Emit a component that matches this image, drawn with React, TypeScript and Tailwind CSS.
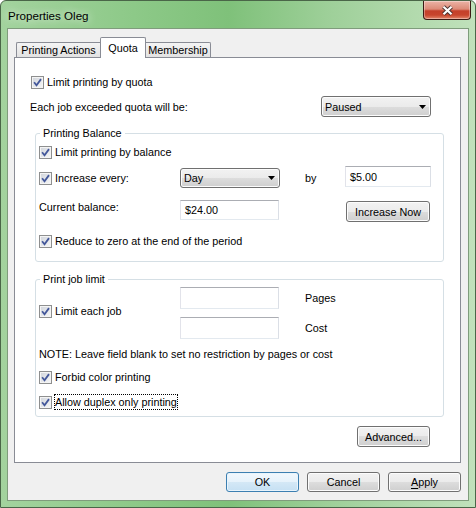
import React from "react";

const face = "font-['Liberation_Sans',Arial,sans-serif]";
const buttonFace =
  "rounded-[3px] border border-[#707070] bg-[linear-gradient(#f2f2f2_0%,#ebebeb_50%,#dddddd_50%,#cfcfcf_100%)] shadow-[inset_0_0_0_1px_#fcfcfc]";
const fieldFace =
  "border border-[#e3e9ef] border-t-[#abadb3] border-l-[#e2e3ea] border-r-[#dbdfe6] bg-white";

function CheckBox() {
  return (
    <span className="flex h-[13px] w-[13px] shrink-0 items-center justify-center border border-[#8e8f8f] bg-[linear-gradient(135deg,#cfd3da,#f8f8f8)] shadow-[inset_0_0_0_1px_#f4f4f4]">
      <svg width="9" height="9" viewBox="0 0 9 9">
        <path d="M1.1 4.3 L3.5 7.2 L8 1.1" fill="none" stroke="#43579a" strokeWidth="1.8" />
      </svg>
    </span>
  );
}

function Check({ label, focused = false, className = "" }: { label: string; focused?: boolean; className?: string }) {
  return (
    <div className={`flex h-[20px] items-center ${className}`}>
      <CheckBox />
      <span className={`ml-[3px] leading-[14px] ${focused ? "outline-1 outline-dotted outline-black" : ""}`}>{label}</span>
    </div>
  );
}

function Combo({ value, className = "" }: { value: string; className?: string }) {
  return (
    <div className={`flex items-center justify-between pl-[3px] pr-[4px] ${buttonFace} ${className}`}>
      <span>{value}</span>
      <svg width="7" height="4" viewBox="0 0 7 4">
        <path d="M0 0 H7 L3.5 4 Z" fill="#000" />
      </svg>
    </div>
  );
}

function Field({ value = "", className = "" }: { value?: string; className?: string }) {
  return <div className={`flex items-center pl-[4px] ${fieldFace} ${className}`}>{value}</div>;
}

function Btn({ children, className = "" }: { children: React.ReactNode; className?: string }) {
  return <div className={`flex items-center justify-center ${buttonFace} ${className}`}>{children}</div>;
}

function CloseButton() {
  return (
    <div className="mr-[4px] flex h-[19px] w-[48px] items-center justify-center rounded-b-[4px] border border-t-0 border-[#3b1a14] bg-[linear-gradient(#ebb3a6_0%,#dc8b78_45%,#c4402a_55%,#c8452d_78%,#e3876b_100%)] shadow-[inset_0_0_0_1px_rgba(255,255,255,0.35)]">
      <svg width="13" height="11" viewBox="0 0 13 11">
        <path d="M2.5 1.8 L10.5 9.2 M10.5 1.8 L2.5 9.2" stroke="#4a3330" strokeWidth="4" />
        <path d="M2.5 1.8 L10.5 9.2 M10.5 1.8 L2.5 9.2" stroke="#ffffff" strokeWidth="2.2" />
      </svg>
    </div>
  );
}

export default function App() {
  return (
    <div className={`${face} h-[508px] w-[476px] bg-white text-[10.8px] leading-[14px] text-black`}>
      <div className="flex h-full w-full flex-col rounded-t-[6px] border border-[#4a6648] bg-[linear-gradient(90deg,#a3d39e_0%,#8dc988_28%,#7fc17a_48%,#9fd09a_70%,#c0e1bb_100%)]">
        {/* caption */}
        <div className="flex h-[27px] shrink-0 items-start justify-between">
          <span className="pl-[7px] pt-[8px] text-[11.6px] [text-shadow:0_0_8px_#ffffff]">Properties Oleg</span>
          <CloseButton />
        </div>

        {/* client area */}
        <div className="mx-[6px] mb-[6px] flex flex-1 flex-col border border-[#7f9c7c] bg-[#f0f0f0] pl-[6px] pr-[7px] pt-[8px]">
          {/* tab strip */}
          <div className="relative z-10 -mb-px flex h-[21px] items-end pl-[2px]">
            <div className="mb-px flex h-[15px] w-[84px] items-center justify-center rounded-tl-[2px] border-l border-t border-[#898c95] bg-[linear-gradient(#f4f4f4,#e2e2e2)]">
              Printing Actions
            </div>
            <div className="flex h-[21px] w-[46px] items-center justify-center rounded-t-[2px] border-x border-t border-[#898c95] bg-white">
              Quota
            </div>
            <div className="mb-px flex h-[15px] w-[65px] items-center justify-center rounded-tr-[2px] border-r border-t border-[#898c95] bg-[linear-gradient(#f4f4f4,#e2e2e2)]">
              Membership
            </div>
          </div>

          {/* tab page */}
          <div className="flex h-[406px] flex-col border border-[#898c95] bg-white pl-[16px] pr-[16px] pt-[14px]">
            <Check label="Limit printing by quota" />

            <div className="mt-[4px] flex items-center justify-between pr-[13px]">
              <span className="-ml-px">Each job exceeded quota will be:</span>
              <Combo value="Paused" className="h-[21px] w-[110px]" />
            </div>

            <fieldset className="ml-[4px] mt-[9px] rounded-[3px] border border-[#d5dfe5] pb-[10px] pl-[3px] pt-[2px]">
              <legend className="ml-px px-[3px] leading-[14px]">Printing Balance</legend>
              <Check label="Limit printing by balance" />

              <div className="mt-[4px] flex h-[24px] items-start">
                <div className="flex h-[24px] w-[141px] items-center">
                  <Check label="Increase every:" />
                </div>
                <Combo value="Day" className="mt-[2px] h-[20px] w-[100px]" />
                <div className="flex h-[24px] w-[65px] items-center pl-[25px]">by</div>
                <Field value="$5.00" className="h-[21px] w-[86px]" />
              </div>

              <div className="mt-[10px] flex h-[22px] items-start">
                <span className="w-[141px]">Current balance:</span>
                <Field value="$24.00" className="h-[20px] w-[99px]" />
                <Btn className="ml-[67px] mt-px h-[21px] w-[84px]">Increase Now</Btn>
              </div>

              <Check label="Reduce to zero at the end of the period" className="mt-[9px]" />
            </fieldset>

            <fieldset className="ml-[4px] mt-[10px] rounded-[3px] border border-[#d5dfe5] pb-[4px] pl-[3px] pt-[1px]">
              <legend className="ml-px px-[3px] leading-[14px]">Print job limit</legend>
              <div className="flex items-start">
                <div className="w-[141px] pt-[14px]">
                  <Check label="Limit each job" />
                </div>
                <div className="flex w-[99px] flex-col gap-[8px]">
                  <Field className="h-[22px]" />
                  <Field className="h-[22px]" />
                </div>
                <div className="ml-[26px] flex flex-col gap-[8px]">
                  <span className="flex h-[22px] items-center">Pages</span>
                  <span className="flex h-[22px] items-center">Cost</span>
                </div>
              </div>

              <p className="mt-[8px]">NOTE: Leave field blank to set no restriction by pages or cost</p>
              <Check label="Forbid color printing" className="mt-[6px]" />
              <Check label="Allow duplex only printing" focused className="mt-[5px]" />
            </fieldset>

            <div className="mt-[9px] flex justify-end pr-[14px]">
              <Btn className="h-[21px] w-[73px]">Advanced...</Btn>
            </div>
          </div>

          {/* dialog buttons */}
          <div className="mt-[9px] flex justify-end gap-[8px]">
            <div className="flex h-[20px] w-[73px] items-center justify-center rounded-[3px] border border-[#3c7fb1] bg-[linear-gradient(#f1f8fd_0%,#e6f2fb_50%,#d4e8f6_50%,#c6e0f3_100%)] shadow-[inset_0_0_0_1px_#e8f4fc]">
              OK
            </div>
            <Btn className="h-[20px] w-[73px]">Cancel</Btn>
            <Btn className="h-[20px] w-[73px]">
              <span>
                <span className="underline underline-offset-[2px]">A</span>pply
              </span>
            </Btn>
          </div>
        </div>
      </div>
    </div>
  );
}
